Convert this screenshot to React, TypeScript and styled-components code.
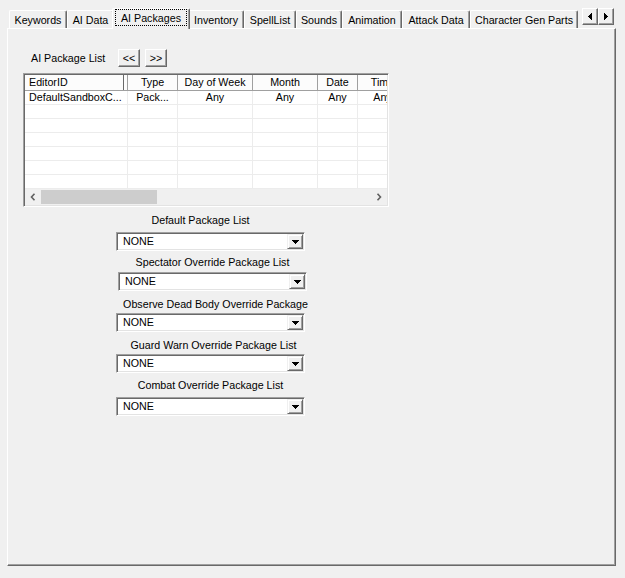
import React from "react";
import styled, { createGlobalStyle } from "styled-components";

const face = "#f0f0f0";
const shadow = "#a0a0a0";
const darkShadow = "#696969";
const gridLine = "#ececec";
const fontSize = "10.7px";

const GlobalStyle = createGlobalStyle`
  html, body {
    margin: 0;
    padding: 0;
    background: ${face};
  }
  body {
    font-family: "Liberation Sans", Arial, sans-serif;
    font-size: ${fontSize};
    color: #000;
  }
`;

const Window = styled.div`
  width: 625px;
  height: 578px;
  background: ${face};
  overflow: hidden;
  font-family: "Liberation Sans", Arial, sans-serif;
  font-size: ${fontSize};
  color: #000;
`;

const TabStrip = styled.div`
  display: flex;
  align-items: flex-end;
  height: 28px;
  padding-left: 9px;
  box-sizing: border-box;
`;

const Tab = styled.div<{ $w: number; $active?: boolean }>`
  flex: none;
  box-sizing: border-box;
  width: ${(p) => (p.$active ? p.$w + 4 : p.$w)}px;
  height: ${(p) => (p.$active ? 21 : 18)}px;
  margin: 0 ${(p) => (p.$active ? -2 : 0)}px ${(p) => (p.$active ? -1 : 0)}px;
  border-top: 1px solid #fff;
  border-left: 1px solid #fff;
  border-right: 1px solid ${darkShadow};
  box-shadow: inset -1px 0 ${shadow};
  border-top-left-radius: 2px;
  border-top-right-radius: 2px;
  background: ${face};
  position: relative;
  z-index: ${(p) => (p.$active ? 1 : 0)};
  display: flex;
  align-items: ${(p) => (p.$active ? "flex-start" : "center")};
  justify-content: center;
  white-space: nowrap;
  line-height: 14px;
`;

const FocusRing = styled.span`
  flex: 1;
  height: 17px;
  margin: 0 2px;
  box-sizing: border-box;
  border: 1px dotted #000;
  display: flex;
  align-items: center;
  justify-content: center;
`;

const SpinGroup = styled.div`
  display: flex;
  align-self: flex-start;
  margin-top: 8px;
  margin-left: 4px;
`;

const RaisedButton = styled.button`
  box-sizing: border-box;
  padding: 0;
  background: ${face};
  border: 1px solid;
  border-color: #fff ${darkShadow} ${darkShadow} #fff;
  box-shadow: inset -1px -1px ${shadow};
  font-family: inherit;
  font-size: ${fontSize};
  color: #000;
  display: flex;
  align-items: center;
  justify-content: center;
`;

const SpinButton = styled(RaisedButton)`
  width: 16px;
  height: 17px;
`;

const Panel = styled.div`
  margin-left: 7px;
  width: 609px;
  height: 538px;
  box-sizing: border-box;
  border-top: 1px solid #fff;
  border-left: 1px solid #fff;
  border-right: 1px solid ${darkShadow};
  border-bottom: 1px solid ${darkShadow};
  box-shadow: inset -1px -1px ${shadow};
  padding: 20px 0 0 15px;
`;

const ListTitleRow = styled.div`
  display: flex;
  align-items: center;
  height: 18px;
`;

const ListTitle = styled.span`
  width: 87px;
  padding-left: 8px;
  white-space: nowrap;
`;

const NavButtons = styled.div`
  display: flex;
  gap: 5px;
`;

const NavButton = styled(RaisedButton)`
  width: 22px;
  height: 18px;
  line-height: 14px;
`;

const ListView = styled.div`
  margin-top: 6px;
  width: 366px;
  height: 134px;
  box-sizing: border-box;
  border: 1px solid;
  border-color: ${shadow} #fff #fff ${shadow};
  box-shadow: inset 1px 1px ${darkShadow}, inset -1px -1px #e3e3e3;
  padding: 1px;
  background: #fff;
  display: flex;
  flex-direction: column;
`;

const ListInner = styled.div`
  flex: 1;
  overflow: hidden;
  display: flex;
  flex-direction: column;
`;

const HeaderRow = styled.div`
  display: flex;
  flex: none;
  height: 16px;
  box-sizing: border-box;
  border-bottom: 1px solid ${shadow};
  background: #fcfcfc;
`;

const HeaderCell = styled.div<{ $w: number; $align: string; $double?: boolean }>`
  flex: none;
  width: ${(p) => p.$w}px;
  box-sizing: border-box;
  padding: 0 4px;
  line-height: 15px;
  text-align: ${(p) => p.$align};
  white-space: nowrap;
  overflow: hidden;
  border-right: 1px solid ${shadow};
  box-shadow: ${(p) =>
    p.$double ? `inset -3px 0 #fcfcfc, inset -4px 0 ${darkShadow}` : "none"};
`;

const Rows = styled.div`
  flex: none;
  height: 98px;
  overflow: hidden;
`;

const Row = styled.div`
  display: flex;
  height: 14px;
  box-sizing: border-box;
  border-bottom: 1px solid ${gridLine};
`;

const Cell = styled.div<{ $w: number; $align: string }>`
  flex: none;
  width: ${(p) => p.$w}px;
  box-sizing: border-box;
  padding: 0 4px;
  line-height: 13px;
  text-align: ${(p) => p.$align};
  white-space: nowrap;
  overflow: hidden;
  border-right: 1px solid ${gridLine};
`;

const ScrollBar = styled.div`
  flex: none;
  height: 16px;
  display: flex;
  background: ${face};
`;

const ScrollArrow = styled.div`
  flex: none;
  width: 16px;
  display: flex;
  align-items: center;
  justify-content: center;
`;

const ScrollTrack = styled.div`
  flex: 1;
  display: flex;
  align-items: center;
`;

const ScrollThumb = styled.div`
  width: 116px;
  height: 14px;
  background: #cdcdcd;
`;

const FieldBlock = styled.div<{ $x: number; $mt: number }>`
  margin-left: ${(p) => 93 + p.$x}px;
  margin-top: ${(p) => p.$mt}px;
  width: 189px;
  display: flex;
  flex-direction: column;
`;

const FieldLabel = styled.div<{ $shift: number; $gap: number }>`
  height: 14px;
  line-height: 14px;
  text-align: center;
  white-space: nowrap;
  margin: 0 -50px ${(p) => p.$gap}px;
  padding-left: ${(p) => Math.max(0, p.$shift * 2)}px;
  padding-right: ${(p) => Math.max(0, -p.$shift * 2)}px;
`;

const Combo = styled.div`
  width: 189px;
  height: 19px;
  box-sizing: border-box;
  border: 1px solid;
  border-color: ${shadow} #fff #fff ${shadow};
  box-shadow: inset 1px 1px ${darkShadow}, inset -1px -1px #e3e3e3;
  padding: 1px;
  background: #fff;
  display: flex;
  align-items: stretch;
`;

const ComboValue = styled.span`
  flex: 1;
  padding-left: 5px;
  line-height: 15px;
`;

const DropButton = styled.div`
  flex: none;
  width: 16px;
  box-sizing: border-box;
  background: ${face};
  border: 1px solid;
  border-color: ${face} ${darkShadow} ${darkShadow} ${face};
  box-shadow: inset 1px 1px #fff, inset -1px -1px ${shadow};
  display: flex;
  align-items: center;
  justify-content: center;
`;

const tabs = [
  { label: "Keywords", w: 58 },
  { label: "AI Data", w: 47 },
  { label: "AI Packages", w: 74, active: true },
  { label: "Inventory", w: 56 },
  { label: "SpellList", w: 52 },
  { label: "Sounds", w: 46 },
  { label: "Animation", w: 60 },
  { label: "Attack Data", w: 68 },
  { label: "Character Gen Parts", w: 108 },
];

const columns = [
  { title: "EditorID", w: 103, align: "left", double: true },
  { title: "Type", w: 50, align: "center" },
  { title: "Day of Week", w: 75, align: "center" },
  { title: "Month", w: 65, align: "center" },
  { title: "Date", w: 40, align: "center" },
  { title: "Time", w: 50, align: "center" },
];

const firstRow = ["DefaultSandboxC...", "Pack...", "Any", "Any", "Any", "Any"];

const fields = [
  { label: "Default Package List", x: 0, mt: 6, gap: 5, shift: -10 },
  { label: "Spectator Override Package List", x: 2, mt: 4, gap: 3, shift: 0 },
  { label: "Observe Dead Body Override Package", x: 0, mt: 6, gap: 2, shift: 5 },
  { label: "Guard Warn Override Package List", x: 0, mt: 6, gap: 2, shift: 3 },
  { label: "Combat Override Package List", x: 0, mt: 5, gap: 5, shift: 0 },
];

const Chevron = ({ dir }: { dir: "left" | "right" }) => (
  <svg width="6" height="8" viewBox="0 0 6 8">
    <path
      d={dir === "left" ? "M4.5 0.8 L1.5 4 L4.5 7.2" : "M1.5 0.8 L4.5 4 L1.5 7.2"}
      fill="none"
      stroke="#606060"
      strokeWidth="1.6"
    />
  </svg>
);

const SpinArrow = ({ dir }: { dir: "left" | "right" }) => (
  <svg width="4" height="7" viewBox="0 0 4 7" shapeRendering="crispEdges">
    <polygon points={dir === "left" ? "4,0 4,7 0,3.5" : "0,0 0,7 4,3.5"} fill="#000" />
  </svg>
);

const DownArrow = () => (
  <svg width="7" height="4" viewBox="0 0 7 4" shapeRendering="crispEdges">
    <polygon points="0,0 7,0 3.5,4" fill="#000" />
  </svg>
);

export default function App() {
  return (
    <Window>
      <GlobalStyle />
      <TabStrip>
        {tabs.map((t) => (
          <Tab key={t.label} $w={t.w} $active={t.active}>
            {t.active ? <FocusRing>{t.label}</FocusRing> : t.label}
          </Tab>
        ))}
        <SpinGroup>
          <SpinButton>
            <SpinArrow dir="left" />
          </SpinButton>
          <SpinButton>
            <SpinArrow dir="right" />
          </SpinButton>
        </SpinGroup>
      </TabStrip>

      <Panel>
        <ListTitleRow>
          <ListTitle>AI Package List</ListTitle>
          <NavButtons>
            <NavButton>&lt;&lt;</NavButton>
            <NavButton>&gt;&gt;</NavButton>
          </NavButtons>
        </ListTitleRow>

        <ListView>
          <ListInner>
            <HeaderRow>
              {columns.map((c) => (
                <HeaderCell key={c.title} $w={c.w} $align={c.align} $double={c.double}>
                  {c.title}
                </HeaderCell>
              ))}
            </HeaderRow>
            <Rows>
              {Array.from({ length: 7 }).map((_, r) => (
                <Row key={r}>
                  {columns.map((c, i) => (
                    <Cell key={c.title} $w={c.w} $align={c.align}>
                      {r === 0 ? firstRow[i] : ""}
                    </Cell>
                  ))}
                </Row>
              ))}
            </Rows>
          </ListInner>
          <ScrollBar>
            <ScrollArrow>
              <Chevron dir="left" />
            </ScrollArrow>
            <ScrollTrack>
              <ScrollThumb />
            </ScrollTrack>
            <ScrollArrow>
              <Chevron dir="right" />
            </ScrollArrow>
          </ScrollBar>
        </ListView>

        {fields.map((f) => (
          <FieldBlock key={f.label} $x={f.x} $mt={f.mt}>
            <FieldLabel $shift={f.shift} $gap={f.gap}>
              {f.label}
            </FieldLabel>
            <Combo>
              <ComboValue>NONE</ComboValue>
              <DropButton>
                <DownArrow />
              </DropButton>
            </Combo>
          </FieldBlock>
        ))}
      </Panel>
    </Window>
  );
}
